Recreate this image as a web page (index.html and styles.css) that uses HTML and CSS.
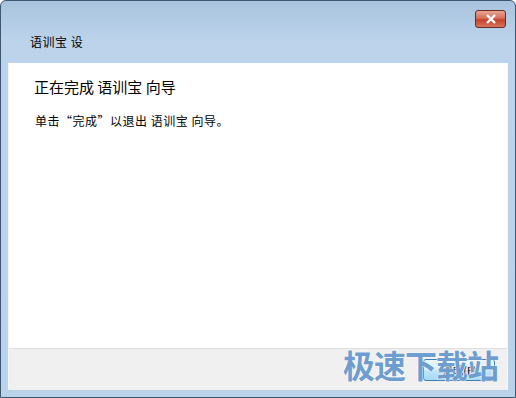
FILE: index.html
```html
<!DOCTYPE html>
<html lang="zh-CN">
<head>
    <meta charset="UTF-8">
    <title>语训宝 设置</title>
    <link rel="stylesheet" href="styles.css">
</head>
<body>
    <div class="window">
        <div class="titlebar">
            <span class="title">语训宝 设</span>
            <button class="close" type="button">
                <svg width="12" height="10" viewBox="0 0 12 10"><path d="M2 1 L10 9 M10 1 L2 9" stroke="#fff" stroke-width="2.4"/></svg>
            </button>
        </div>
        <div class="client">
            <div class="content">
                <h1>正在完成 语训宝 向导</h1>
                <p>单击“完成”以退出 语训宝 向导。</p>
            </div>
            <div class="footer">
                <button class="finish" type="button">完成(F)</button>
            </div>
        </div>
        <div class="watermark">极速下载站</div>
    </div>
</body>
</html>
```

FILE: styles.css
```css
html, body { margin: 0; padding: 0; }
body { font-family: "Noto Sans CJK SC", "Liberation Sans", sans-serif; font-size: 12px; color: #000; background: #fff; }
.window { position: relative; width: 516px; height: 398px; box-sizing: border-box; border: 1px solid #3c5770; border-radius: 6px 6px 0 0; background: linear-gradient(to bottom, #a9c3de 0, #bcd3eb 40px, #bad2ea 100%); padding: 0 7px 7px 7px; display: flex; flex-direction: column; overflow: hidden; }
.titlebar { height: 62px; display: flex; align-items: flex-start; justify-content: space-between; }
.title { margin: 33px 0 0 22px; font-size: 12px; line-height: 16px; letter-spacing: 0.5px; color: #000; }
.close { margin: 9px 2px 0 0; width: 31px; height: 18px; border: 1px solid #6b2a22; border-radius: 3px; background: linear-gradient(to bottom, #e8a493 0, #d5705a 45%, #c2432a 55%, #d6765e 100%); display: flex; align-items: center; justify-content: center; padding: 0; }
.client { flex: 1; display: flex; flex-direction: column; border: 1px solid #f4f7fb; border-bottom: none; border-top: none; }
.content { height: 286px; background: #fff; border-bottom: 1px solid #dfdfdf; padding: 14px 0 0 24px; box-sizing: border-box; }
h1 { margin: 0 0 16px 1px; font-size: 15px; font-weight: normal; line-height: 20px; }
p { margin: 0 0 0 2px; font-size: 12px; line-height: 16px; letter-spacing: 0.5px; }
.footer { flex: 1; background: #f0f0f0; display: flex; justify-content: flex-end; align-items: center; padding-right: 12px; }
.finish { width: 72px; height: 22px; font-family: inherit; font-size: 11px; border: 1px solid #3c7fb1; border-radius: 3px; background: linear-gradient(to bottom, #eaf6fd 0, #d9f0fc 50%, #bee6fd 51%, #a7d9f5 100%); padding: 0; color: #000; }
.watermark { position: absolute; left: 342px; top: 343px; font-size: 32px; line-height: 40px; font-weight: bold; letter-spacing: -1px; color: rgba(70, 130, 195, 0.8); text-shadow: 0 0 2px #fff, 0 0 1px #fff; }
```
